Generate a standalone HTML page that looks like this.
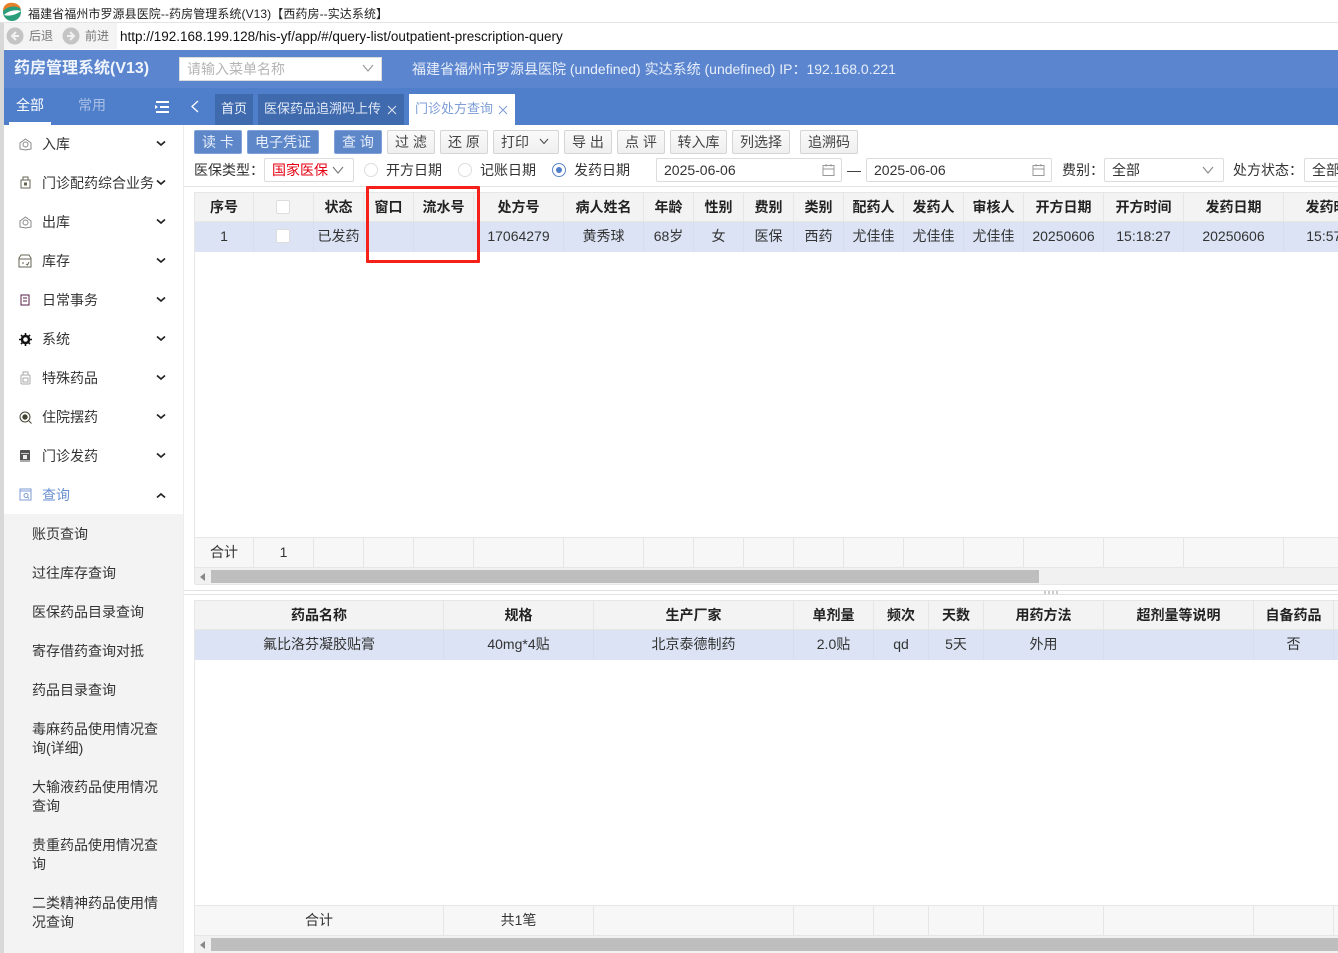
<!DOCTYPE html>
<html lang="zh"><head><meta charset="utf-8"><title>药房管理系统</title>
<style>
*{box-sizing:border-box}
html,body{margin:0;padding:0;width:1338px;height:953px;overflow:hidden;background:#fff}
body{position:relative;font:14px/20px "Liberation Sans","Noto Sans CJK SC","WenQuanYi Zen Hei",sans-serif;color:#333}
.a{position:absolute;white-space:nowrap}
.btn{position:absolute;top:130px;height:24px;border:1px solid #d5d5d5;border-radius:2px;background:linear-gradient(#fafafa,#efefef);text-align:center;line-height:22px;color:#444;white-space:nowrap}
.btn.b{background:#5d87c9;border-color:#7fa0d6;color:#e8eefa}
.inp{position:absolute;top:158px;height:24px;border:1px solid #dcdcdc;border-radius:2px;background:#fff;line-height:22px;padding-left:7px;white-space:nowrap}
.m{position:absolute;left:42px;white-space:nowrap;color:#333}
.s{position:absolute;left:32px;width:132px;line-height:19px;color:#333}
.c{position:absolute;text-align:center;white-space:nowrap;border-right:1px solid #e6e6e6;height:100%;top:0;line-height:28px}
.row{position:absolute;overflow:hidden;left:195px;width:1143px}
.h{background:#f3f3f3;font-weight:bold;color:#222;border-top:1px solid #e6e6e6;border-bottom:1px solid #e6e6e6}
.d{background:#dbe3f4;color:#333}
.d .c{border-right:1px solid #d6def0;line-height:29px}
.f{background:#f7f7f7;border-top:1px solid #e6e6e6;border-bottom:1px solid #e6e6e6}
.chk{position:absolute;width:14px;height:14px;background:#fff;border:1px solid #ddd;border-radius:2px}
.rad{position:absolute;top:163px;width:14px;height:14px;border:1px solid #ddd;border-radius:50%;background:#fff}
svg{position:absolute;overflow:visible}
</style></head><body>

<!-- window title -->
<svg style="left:2px;top:2px" width="20" height="20" viewBox="0 0 20 20"><circle cx="10" cy="10" r="9" fill="#2a9d7a"/><path d="M1 9C1 3 6 0 11 1C15 1 18 4 19 7C14 3 6 4 1 9Z" fill="#e8802a"/><path d="M2 13C6 9 13 7 19 9C15 12 8 15 2 13Z" fill="#fff"/></svg>
<div class="a" style="left:28px;top:4px;font-size:12px;letter-spacing:.08px;color:#222">福建省福州市罗源县医院--药房管理系统(V13)【西药房--实达系统】</div>
<div class="a" style="left:0;top:22px;width:1338px;height:1px;background:#e4e4e4"></div>

<!-- browser bar -->
<div class="a" style="left:0;top:23px;width:117px;height:26px;background:#f4f4f4"></div>
<div class="a" style="left:0;top:23px;width:4px;height:930px;background:#d8d8d8"></div>
<svg style="left:6px;top:27px" width="18" height="18" viewBox="0 0 18 18"><circle cx="9" cy="9" r="8.5" fill="#c4c4c4"/><path d="M10 5L6 9L10 13M6 9H13" stroke="#f2f2f2" stroke-width="2" fill="none"/></svg>
<div class="a" style="left:29px;top:26px;font-size:12px;color:#777">后退</div>
<svg style="left:62px;top:27px" width="18" height="18" viewBox="0 0 18 18"><circle cx="9" cy="9" r="8.5" fill="#c4c4c4"/><path d="M8 5L12 9L8 13M12 9H5" stroke="#f2f2f2" stroke-width="2" fill="none"/></svg>
<div class="a" style="left:85px;top:26px;font-size:12px;color:#777">前进</div>
<div class="a" style="left:120px;top:27px;font-size:13.5px;color:#111">http://192.168.199.128/his-yf/app/#/query-list/outpatient-prescription-query</div>

<!-- top header -->
<div class="a" style="left:4px;top:50px;width:1334px;height:38px;background:#5b86cf"></div>
<div class="a" style="left:14px;top:59px;font-size:16px;font-weight:bold;color:#f0f4fb">药房管理系统(V13)</div>
<div class="a" style="left:179px;top:57px;width:203px;height:24px;background:#fff;border:1px solid #dcdcdc;line-height:22px;padding-left:7px;color:#b5b5b5">请输入菜单名称</div>
<svg style="left:362px;top:64px" width="12" height="9" viewBox="0 0 12 9"><path d="M1 1L6 7L11 1" stroke="#999" stroke-width="1.2" fill="none"/></svg>
<div class="a" style="left:412px;top:59px;color:#e8eefa">福建省福州市罗源县医院 (undefined) 实达系统 (undefined) IP：192.168.0.221</div>

<!-- nav row -->
<div class="a" style="left:4px;top:88px;width:1334px;height:37px;background:#4f7ecb"></div>
<div class="a" style="left:16px;top:95px;color:#fff">全部</div>
<div class="a" style="left:9px;top:122px;width:42px;height:3px;background:#fff"></div>
<div class="a" style="left:78px;top:95px;color:#a9c0e6">常用</div>
<svg style="left:155px;top:100px" width="14" height="14" viewBox="0 0 14 14"><path d="M1 2H14M5 7H14M1 12H14" stroke="#fff" stroke-width="2" fill="none"/><path d="M0 5L3 7L0 9Z" fill="#fff"/></svg>
<svg style="left:190px;top:100px" width="10" height="13" viewBox="0 0 10 13"><path d="M8 1L2 6.5L8 12" stroke="#fff" stroke-width="1.3" fill="none"/></svg>
<div class="a" style="left:215px;top:94px;width:38px;height:31px;background:#3f6aae;color:#eef2fa;text-align:center;line-height:30px;font-size:13px">首页</div>
<div class="a" style="left:258px;top:94px;width:146px;height:31px;background:#3f6aae;color:#dfe7f5;padding-left:6px;line-height:30px;font-size:13px">医保药品追溯码上传</div>
<svg style="left:387px;top:105px" width="10" height="10" viewBox="0 0 10 10"><path d="M1 1L9 9M9 1L1 9" stroke="#dfe7f5" stroke-width="1"/></svg>
<div class="a" style="left:409px;top:94px;width:106px;height:31px;background:#fff;color:#7d9dd6;padding-left:6px;line-height:30px;font-size:13px">门诊处方查询</div>
<svg style="left:498px;top:105px" width="10" height="10" viewBox="0 0 10 10"><path d="M1 1L9 9M9 1L1 9" stroke="#7d9dd6" stroke-width="1"/></svg>

<!-- sidebar -->
<div class="a" style="left:4px;top:125px;width:180px;height:828px;background:#fff;border-right:1px solid #ececec"></div>
<div class="a" style="left:4px;top:514px;width:179px;height:439px;background:#f3f3f3"></div>
<div class="m" style="top:134px">入库</div>
<div class="m" style="top:173px">门诊配药综合业务</div>
<div class="m" style="top:212px">出库</div>
<div class="m" style="top:251px">库存</div>
<div class="m" style="top:290px">日常事务</div>
<div class="m" style="top:329px">系统</div>
<div class="m" style="top:368px">特殊药品</div>
<div class="m" style="top:407px">住院摆药</div>
<div class="m" style="top:446px">门诊发药</div>
<div class="m" style="top:485px;color:#6a90d2">查询</div>

<svg style="left:19px;top:138px" width="13" height="13" viewBox="0 0 13 13" fill="none" stroke="#888"><path d="M6.5 1L12 5V11L6.5 12L1 11V5Z"/><circle cx="6.5" cy="6.5" r="2.5"/></svg>
<svg style="left:20px;top:176px" width="11" height="13" viewBox="0 0 11 13" fill="none" stroke="#665"><rect x="1" y="4" width="9" height="8"/><path d="M3 4V1H8V4"/><rect x="4.5" y="7" width="2" height="2" fill="#553"/></svg>
<svg style="left:19px;top:216px" width="13" height="13" viewBox="0 0 13 13" fill="none" stroke="#888"><path d="M6.5 1L12 5V11L6.5 12L1 11V5Z"/><circle cx="6.5" cy="6.5" r="2.5"/></svg>
<svg style="left:18px;top:254px" width="14" height="14" viewBox="0 0 14 14" fill="none" stroke="#665"><path d="M1 4L3 1H11L13 4V13H1Z"/><path d="M1 5H13M4 9H6M8 10L9.500 11L11 8"/></svg>
<svg style="left:20px;top:294px" width="10" height="12" viewBox="0 0 10 12" fill="none" stroke="#524"><rect x="1" y="1" width="8" height="10"/><path d="M3 4H7M3 7H7"/></svg>
<svg style="left:19px;top:333px" width="13" height="13" viewBox="0 0 13 13"><circle cx="6.500" cy="6.500" r="3.500" fill="none" stroke="#111" stroke-width="2.500"/><path d="M6.500 0V13M0 6.500H13M2 2L11 11M11 2L2 11" stroke="#111" stroke-width="1.600" stroke-dasharray="2.500 8 2.500 0"/></svg>
<svg style="left:20px;top:371px" width="11" height="14" viewBox="0 0 11 14" fill="none" stroke="#aaa"><rect x="1" y="4" width="9" height="9" rx="1"/><rect x="3" y="7" width="5" height="4"/><path d="M3 4V1H8V4"/></svg>
<svg style="left:19px;top:411px" width="13" height="13" viewBox="0 0 13 13" fill="none" stroke="#443"><circle cx="6" cy="6" r="5"/><circle cx="6" cy="6" r="2.200" fill="#443"/><path d="M10 10L12.500 12.500"/></svg>
<svg style="left:20px;top:450px" width="10" height="12" viewBox="0 0 10 12"><rect width="10" height="12" rx="1" fill="#555"/><rect x="1" y="3" width="8" height="1" fill="#ccc"/><rect x="3" y="5" width="4" height="4" fill="#eee"/><rect y="10" width="10" height="2" fill="#aaa"/></svg>
<svg style="left:19px;top:488px" width="13" height="13" viewBox="0 0 13 13" fill="none" stroke="#7d9dd6"><rect x="1" y="1" width="11" height="11"/><path d="M1 3H12"/><circle cx="7" cy="7.500" r="2"/><path d="M8.500 9L10 10.500"/></svg>

<svg style="left:156px;top:140px" width="10" height="7" viewBox="0 0 10 7"><path d="M1 1.500L5 5L9 1.500" stroke="#222" stroke-width="1.700" fill="none"/></svg>
<svg style="left:156px;top:179px" width="10" height="7" viewBox="0 0 10 7"><path d="M1 1.500L5 5L9 1.500" stroke="#222" stroke-width="1.700" fill="none"/></svg>
<svg style="left:156px;top:218px" width="10" height="7" viewBox="0 0 10 7"><path d="M1 1.500L5 5L9 1.500" stroke="#222" stroke-width="1.700" fill="none"/></svg>
<svg style="left:156px;top:257px" width="10" height="7" viewBox="0 0 10 7"><path d="M1 1.500L5 5L9 1.500" stroke="#222" stroke-width="1.700" fill="none"/></svg>
<svg style="left:156px;top:296px" width="10" height="7" viewBox="0 0 10 7"><path d="M1 1.500L5 5L9 1.500" stroke="#222" stroke-width="1.700" fill="none"/></svg>
<svg style="left:156px;top:335px" width="10" height="7" viewBox="0 0 10 7"><path d="M1 1.500L5 5L9 1.500" stroke="#222" stroke-width="1.700" fill="none"/></svg>
<svg style="left:156px;top:374px" width="10" height="7" viewBox="0 0 10 7"><path d="M1 1.500L5 5L9 1.500" stroke="#222" stroke-width="1.700" fill="none"/></svg>
<svg style="left:156px;top:413px" width="10" height="7" viewBox="0 0 10 7"><path d="M1 1.500L5 5L9 1.500" stroke="#222" stroke-width="1.700" fill="none"/></svg>
<svg style="left:156px;top:452px" width="10" height="7" viewBox="0 0 10 7"><path d="M1 1.500L5 5L9 1.500" stroke="#222" stroke-width="1.700" fill="none"/></svg>
<svg style="left:156px;top:492px" width="10" height="7" viewBox="0 0 10 7"><path d="M1 5.500L5 2L9 5.500" stroke="#222" stroke-width="1.700" fill="none"/></svg>

<div class="s" style="top:525px">账页查询</div>
<div class="s" style="top:564px">过往库存查询</div>
<div class="s" style="top:603px">医保药品目录查询</div>
<div class="s" style="top:642px">寄存借药查询对抵</div>
<div class="s" style="top:681px">药品目录查询</div>
<div class="s" style="top:720px">毒麻药品使用情况查询(详细)</div>
<div class="s" style="top:778px">大输液药品使用情况查询</div>
<div class="s" style="top:836px">贵重药品使用情况查询</div>
<div class="s" style="top:894px">二类精神药品使用情况查询</div>

<!-- toolbar -->
<div class="btn b" style="left:194px;width:48px">读 卡</div>
<div class="btn b" style="left:247px;width:72px">电子凭证</div>
<div class="btn b" style="left:334px;width:48px">查 询</div>
<div class="btn" style="left:387px;width:48px">过 滤</div>
<div class="btn" style="left:440px;width:48px">还 原</div>
<div class="btn" style="left:493px;width:66px;text-align:left;padding-left:7px">打印</div>
<svg style="left:539px;top:138px" width="10" height="7" viewBox="0 0 10 7"><path d="M1 1L5 5.500L9 1" stroke="#555" stroke-width="1.200" fill="none"/></svg>
<div class="btn" style="left:564px;width:48px">导 出</div>
<div class="btn" style="left:617px;width:48px">点 评</div>
<div class="btn" style="left:670px;width:57px">转入库</div>
<div class="btn" style="left:732px;width:58px">列选择</div>
<div class="btn" style="left:800px;width:58px">追溯码</div>

<!-- filter -->
<div class="a" style="left:194px;top:160px">医保类型：</div>
<div class="inp" style="left:264px;width:90px;color:#e60012">国家医保</div>
<svg style="left:332px;top:166px" width="12" height="8" viewBox="0 0 12 8"><path d="M1 1L6 7L11 1" stroke="#777" stroke-width="1.100" fill="none"/></svg>
<div class="rad" style="left:364px"></div><div class="a" style="left:386px;top:160px">开方日期</div>
<div class="rad" style="left:458px"></div><div class="a" style="left:480px;top:160px">记账日期</div>
<div class="rad" style="left:552px;border-color:#5d87c9"></div><div class="a" style="left:556px;top:167px;width:6px;height:6px;border-radius:50%;background:#4f7ecb"></div><div class="a" style="left:574px;top:160px">发药日期</div>
<div class="inp" style="left:656px;width:186px">2025-06-06</div>
<svg style="left:822px;top:163px" width="13" height="14" viewBox="0 0 13 14" fill="none" stroke="#999"><rect x="1" y="2.500" width="11" height="10"/><path d="M1 6H12M4 1V3.500M9 1V3.500"/></svg>
<div class="a" style="left:847px;top:160px">—</div>
<div class="inp" style="left:866px;width:186px">2025-06-06</div>
<svg style="left:1032px;top:163px" width="13" height="14" viewBox="0 0 13 14" fill="none" stroke="#999"><rect x="1" y="2.500" width="11" height="10"/><path d="M1 6H12M4 1V3.500M9 1V3.500"/></svg>
<div class="a" style="left:1062px;top:160px">费别：</div>
<div class="inp" style="left:1104px;width:120px">全部</div>
<svg style="left:1202px;top:166px" width="12" height="8" viewBox="0 0 12 8"><path d="M1 1L6 7L11 1" stroke="#888" stroke-width="1.100" fill="none"/></svg>
<div class="a" style="left:1233px;top:160px">处方状态：</div>
<div class="inp" style="left:1304px;width:60px">全部</div>
<div class="a" style="left:184px;top:186px;width:1154px;height:1px;background:#e4e4e4"></div>

<!-- top table -->
<div class="a" style="left:194px;top:192px;width:1px;height:392px;background:#e6e6e6"></div>
<div class="row h" style="top:192px;height:30px">
<div class="c" style="left:0;width:59px">序号</div>
<div class="c" style="left:59px;width:60px"></div>
<div class="c" style="left:119px;width:50px">状态</div>
<div class="c" style="left:169px;width:50px">窗口</div>
<div class="c" style="left:219px;width:60px">流水号</div>
<div class="c" style="left:279px;width:90px">处方号</div>
<div class="c" style="left:369px;width:80px">病人姓名</div>
<div class="c" style="left:449px;width:50px">年龄</div>
<div class="c" style="left:499px;width:50px">性别</div>
<div class="c" style="left:549px;width:50px">费别</div>
<div class="c" style="left:599px;width:50px">类别</div>
<div class="c" style="left:649px;width:60px">配药人</div>
<div class="c" style="left:709px;width:60px">发药人</div>
<div class="c" style="left:769px;width:60px">审核人</div>
<div class="c" style="left:829px;width:80px">开方日期</div>
<div class="c" style="left:909px;width:80px">开方时间</div>
<div class="c" style="left:989px;width:100px">发药日期</div>
<div class="c" style="left:1089px;width:100px">发药时间</div>
</div>
<div class="chk" style="left:276px;top:200px"></div>
<div class="row d" style="top:222px;height:30px">
<div class="c" style="left:0;width:59px">1</div>
<div class="c" style="left:59px;width:60px"></div>
<div class="c" style="left:119px;width:50px">已发药</div>
<div class="c" style="left:169px;width:50px"></div>
<div class="c" style="left:219px;width:60px"></div>
<div class="c" style="left:279px;width:90px">17064279</div>
<div class="c" style="left:369px;width:80px">黄秀球</div>
<div class="c" style="left:449px;width:50px">68岁</div>
<div class="c" style="left:499px;width:50px">女</div>
<div class="c" style="left:549px;width:50px">医保</div>
<div class="c" style="left:599px;width:50px">西药</div>
<div class="c" style="left:649px;width:60px">尤佳佳</div>
<div class="c" style="left:709px;width:60px">尤佳佳</div>
<div class="c" style="left:769px;width:60px">尤佳佳</div>
<div class="c" style="left:829px;width:80px">20250606</div>
<div class="c" style="left:909px;width:80px">15:18:27</div>
<div class="c" style="left:989px;width:100px">20250606</div>
<div class="c" style="left:1089px;width:100px">15:57:12</div>
</div>
<div class="chk" style="left:276px;top:229px"></div>

<div class="row f" style="top:537px;height:31px">
<div class="c" style="left:0;width:59px">合计</div>
<div class="c" style="left:59px;width:60px">1</div>
<div class="c" style="left:119px;width:50px"></div>
<div class="c" style="left:169px;width:50px"></div>
<div class="c" style="left:219px;width:60px"></div>
<div class="c" style="left:279px;width:90px"></div>
<div class="c" style="left:369px;width:80px"></div>
<div class="c" style="left:449px;width:50px"></div>
<div class="c" style="left:499px;width:50px"></div>
<div class="c" style="left:549px;width:50px"></div>
<div class="c" style="left:599px;width:50px"></div>
<div class="c" style="left:649px;width:60px"></div>
<div class="c" style="left:709px;width:60px"></div>
<div class="c" style="left:769px;width:60px"></div>
<div class="c" style="left:829px;width:80px"></div>
<div class="c" style="left:909px;width:80px"></div>
<div class="c" style="left:989px;width:100px"></div>
<div class="c" style="left:1089px;width:100px"></div>
</div>
<div class="a" style="left:195px;top:568px;width:1143px;height:17px;background:#f1f1f1;border-bottom:1px solid #e6e6e6"></div>
<div class="a" style="left:211px;top:570px;width:828px;height:13px;background:#bebebe"></div>
<svg style="left:200px;top:573px" width="5" height="8" viewBox="0 0 5 8"><path d="M5 0V8L0 4Z" fill="#888"/></svg>

<!-- splitter -->
<div class="a" style="left:184px;top:590px;width:1154px;height:5px;border-top:1px solid #e2e2e2;border-bottom:1px solid #e2e2e2"></div>
<div class="a" style="left:1044px;top:591px;width:15px;height:3px;background:repeating-linear-gradient(90deg,#ccc 0 2px,#fff 2px 4px)"></div>

<!-- bottom table -->
<div class="a" style="left:194px;top:600px;width:1px;height:353px;background:#e6e6e6"></div>
<div class="row h" style="top:600px;height:30px">
<div class="c" style="left:0;width:249px">药品名称</div>
<div class="c" style="left:249px;width:150px">规格</div>
<div class="c" style="left:399px;width:200px">生产厂家</div>
<div class="c" style="left:599px;width:80px">单剂量</div>
<div class="c" style="left:679px;width:55px">频次</div>
<div class="c" style="left:734px;width:55px">天数</div>
<div class="c" style="left:789px;width:120px">用药方法</div>
<div class="c" style="left:909px;width:150px">超剂量等说明</div>
<div class="c" style="left:1059px;width:80px">自备药品</div>
</div>
<div class="row d" style="top:630px;height:30px">
<div class="c" style="left:0;width:249px">氟比洛芬凝胶贴膏</div>
<div class="c" style="left:249px;width:150px">40mg*4贴</div>
<div class="c" style="left:399px;width:200px">北京泰德制药</div>
<div class="c" style="left:599px;width:80px">2.0贴</div>
<div class="c" style="left:679px;width:55px">qd</div>
<div class="c" style="left:734px;width:55px">5天</div>
<div class="c" style="left:789px;width:120px">外用</div>
<div class="c" style="left:909px;width:150px"></div>
<div class="c" style="left:1059px;width:80px">否</div>
</div>
<div class="row f" style="top:905px;height:31px">
<div class="c" style="left:0;width:249px">合计</div>
<div class="c" style="left:249px;width:150px">共1笔</div>
<div class="c" style="left:399px;width:200px"></div>
<div class="c" style="left:599px;width:80px"></div>
<div class="c" style="left:679px;width:55px"></div>
<div class="c" style="left:734px;width:55px"></div>
<div class="c" style="left:789px;width:120px"></div>
<div class="c" style="left:909px;width:150px"></div>
<div class="c" style="left:1059px;width:80px"></div>
</div>
<div class="a" style="left:195px;top:936px;width:1143px;height:17px;background:#f1f1f1"></div>
<div class="a" style="left:211px;top:938px;width:1127px;height:13px;background:#bebebe"></div>
<svg style="left:200px;top:941px" width="5" height="8" viewBox="0 0 5 8"><path d="M5 0V8L0 4Z" fill="#888"/></svg>

<!-- red highlight -->
<div class="a" style="left:366px;top:186px;width:114px;height:77px;border:3px solid #f5201a;border-radius:1px"></div>
</body></html>
